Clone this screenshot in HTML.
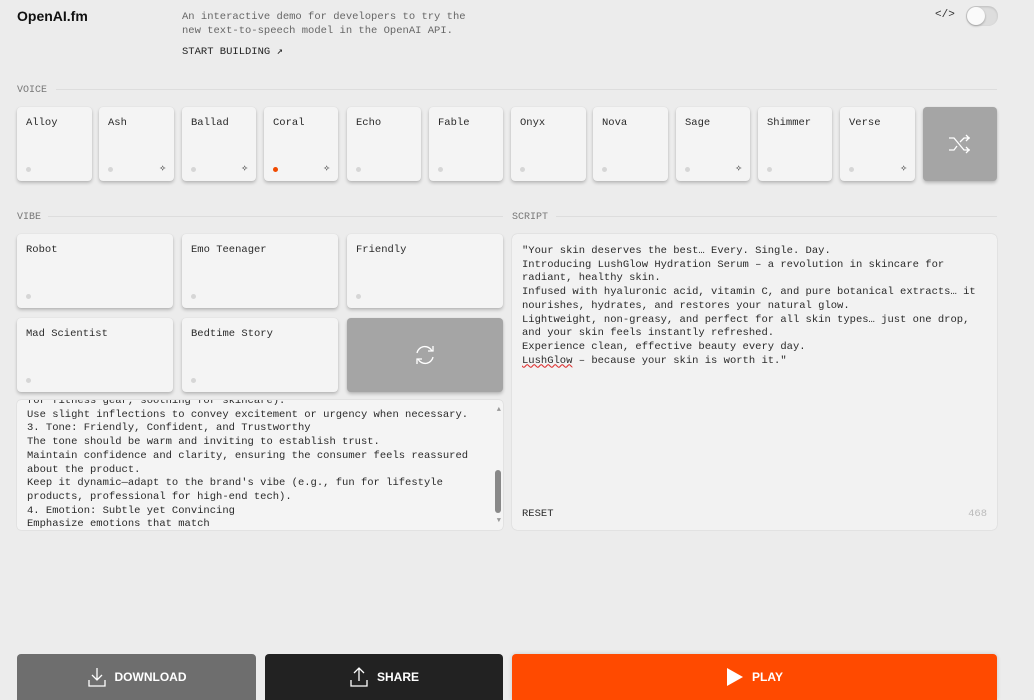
<!DOCTYPE html>
<html><head><meta charset="utf-8"><style>
*{box-sizing:border-box;margin:0;padding:0}
body{width:1034px;height:700px;background:#ececec;font-family:"Liberation Mono",monospace;color:#222;position:relative;overflow:hidden}
.abs{position:absolute}
.logo{left:17px;top:8px;font-family:"Liberation Sans",sans-serif;font-weight:bold;font-size:14px;color:#111}
.desc{left:182px;top:10px;font-size:10.5px;line-height:14px;color:#666}
.sb{left:182px;top:45px;font-size:10.5px;color:#222}
.lbl{font-size:10px;color:#777}
.line{height:1px;background:#ddd}
.card{position:absolute;background:#f4f4f4;border-radius:4px;box-shadow:0 2px 3px rgba(0,0,0,.22),0 0 1px rgba(0,0,0,.1);font-size:10.5px;padding:10px 9px;color:#2a2a2a}
.dot{position:absolute;left:9px;bottom:9px;width:5px;height:5px;border-radius:50%;background:#d6d6d6}
.star{position:absolute;right:8px;bottom:6px;font-size:11px;color:#111;font-weight:bold}
.grey{background:#a5a5a5}
.ta{left:17px;top:400px;width:486px;height:130px;background:#f4f4f4;border-radius:4px;box-shadow:0 0 1px rgba(0,0,0,.25);overflow:hidden;font-size:10.5px;line-height:13.7px;padding:0 10px;color:#2a2a2a}
.sc{left:512px;top:234px;width:485px;height:296px;background:#f2f2f2;border-radius:5px;box-shadow:0 0 1px rgba(0,0,0,.25);font-size:10.5px;line-height:13.7px;padding:11px 10px;color:#2a2a2a}
.btn{position:absolute;top:654px;height:46px;border-radius:4px 4px 0 0;color:#fff;font-family:"Liberation Sans",sans-serif;font-weight:bold;font-size:12px;display:flex;align-items:center;justify-content:center;gap:8px}
</style></head><body>
<div class="abs logo">OpenAI.fm</div>
<div class="abs desc">An interactive demo for developers to try the<br>new text-to-speech model in the OpenAI API.</div>
<div class="abs sb">START BUILDING ↗</div>
<div class="abs" style="left:935px;top:9px;font-size:11px;color:#333">&lt;/&gt;</div>
<div class="abs" style="left:966px;top:6px;width:32px;height:20px;border-radius:10px;background:#ddd;box-shadow:inset 0 1px 2px rgba(0,0,0,.15)"><div style="width:18px;height:18px;margin:1px;border-radius:50%;background:#fafafa;box-shadow:0 1px 2px rgba(0,0,0,.3)"></div></div>

<div class="abs lbl" style="left:17px;top:85px">VOICE</div>
<div class="abs line" style="left:56px;top:89px;width:941px"></div>

<div class="card" style="left:17px;top:107px;width:75px;height:74px">Alloy<span class="dot"></span></div>
<div class="card" style="left:99px;top:107px;width:75px;height:74px">Ash<span class="dot"></span><span class="star">✧</span></div>
<div class="card" style="left:182px;top:107px;width:74px;height:74px">Ballad<span class="dot"></span><span class="star">✧</span></div>
<div class="card" style="left:264px;top:107px;width:74px;height:74px">Coral<span class="dot" style="background:#f04a00"></span><span class="star">✧</span></div>
<div class="card" style="left:347px;top:107px;width:74px;height:74px">Echo<span class="dot"></span></div>
<div class="card" style="left:429px;top:107px;width:74px;height:74px">Fable<span class="dot"></span></div>
<div class="card" style="left:511px;top:107px;width:75px;height:74px">Onyx<span class="dot"></span></div>
<div class="card" style="left:593px;top:107px;width:75px;height:74px">Nova<span class="dot"></span></div>
<div class="card" style="left:676px;top:107px;width:74px;height:74px">Sage<span class="dot"></span><span class="star">✧</span></div>
<div class="card" style="left:758px;top:107px;width:74px;height:74px">Shimmer<span class="dot"></span></div>
<div class="card" style="left:840px;top:107px;width:75px;height:74px">Verse<span class="dot"></span><span class="star">✧</span></div>
<div class="card grey" style="left:923px;top:107px;width:74px;height:74px"><svg class="abs" style="left:25px;top:26px" width="24" height="22" viewBox="0 0 24 22" fill="none" stroke="#fff" stroke-width="1.3"><path d="M1 5h5l10 12h6M18 14l3 3-3 3M1 17h5l3-4M12 9l4-4h6M18 2l3 3-3 3"/></svg></div>

<div class="abs lbl" style="left:17px;top:212px">VIBE</div>
<div class="abs line" style="left:48px;top:216px;width:455px"></div>
<div class="abs lbl" style="left:512px;top:212px">SCRIPT</div>
<div class="abs line" style="left:556px;top:216px;width:441px"></div>

<div class="card" style="left:17px;top:234px;width:156px;height:74px">Robot<span class="dot"></span></div>
<div class="card" style="left:182px;top:234px;width:156px;height:74px">Emo Teenager<span class="dot"></span></div>
<div class="card" style="left:347px;top:234px;width:156px;height:74px">Friendly<span class="dot"></span></div>
<div class="card" style="left:17px;top:318px;width:156px;height:74px">Mad Scientist<span class="dot"></span></div>
<div class="card" style="left:182px;top:318px;width:156px;height:74px">Bedtime Story<span class="dot"></span></div>
<div class="card grey" style="left:347px;top:318px;width:156px;height:74px"><svg class="abs" style="left:67px;top:26px" width="22" height="22" viewBox="0 0 22 22" fill="none" stroke="#fff" stroke-width="1.3"><path d="M3 9a8 8 0 0 1 15-2M19 2v5h-5M19 13a8 8 0 0 1-15 2M3 20v-5h5"/></svg></div>

<div class="abs ta"><div style="margin-top:-5px">for fitness gear, soothing for skincare).<br>Use slight inflections to convey excitement or urgency when necessary.<br>3. Tone: Friendly, Confident, and Trustworthy<br>The tone should be warm and inviting to establish trust.<br>Maintain confidence and clarity, ensuring the consumer feels reassured<br>about the product.<br>Keep it dynamic—adapt to the brand's vibe (e.g., fun for lifestyle<br>products, professional for high-end tech).<br>4. Emotion: Subtle yet Convincing<br>Emphasize emotions that match</div>
<div class="abs" style="right:2px;top:70px;width:6px;height:43px;border-radius:3px;background:#888"></div>
<div class="abs" style="right:2px;top:4px;font-size:7px;color:#999">▲</div>
<div class="abs" style="right:2px;bottom:1px;font-size:7px;color:#999">▼</div></div>

<div class="abs sc">"Your skin deserves the best… Every. Single. Day.<br>Introducing LushGlow Hydration Serum – a revolution in skincare for<br>radiant, healthy skin.<br>Infused with hyaluronic acid, vitamin C, and pure botanical extracts… it<br>nourishes, hydrates, and restores your natural glow.<br>Lightweight, non-greasy, and perfect for all skin types… just one drop,<br>and your skin feels instantly refreshed.<br>Experience clean, effective beauty every day.<br><span style="text-decoration:underline wavy #d33">LushGlow</span> – because your skin is worth it."
<div class="abs" style="left:10px;bottom:8px">RESET</div>
<div class="abs" style="right:10px;bottom:8px;color:#bbb">468</div></div>

<div class="btn" style="left:17px;width:239px;background:#6e6e6e"><svg width="20" height="22" viewBox="0 0 20 22" fill="none" stroke="#fff" stroke-width="1.3"><path d="M10 2v12M5 9l5 5 5-5M2 14v6h16v-6"/></svg>DOWNLOAD</div>
<div class="btn" style="left:265px;width:238px;background:#222"><svg width="20" height="22" viewBox="0 0 20 22" fill="none" stroke="#fff" stroke-width="1.3"><path d="M10 15V2M5 7l5-5 5 5M2 14v6h16v-6"/></svg>SHARE</div>
<div class="btn" style="left:512px;width:485px;background:#ff4a00;box-shadow:0 0 4px rgba(0,0,0,.15)"><svg width="18" height="20" viewBox="0 0 18 20"><path d="M1 1l16 9-16 9z" fill="#fff"/></svg>PLAY</div>
</body></html>
